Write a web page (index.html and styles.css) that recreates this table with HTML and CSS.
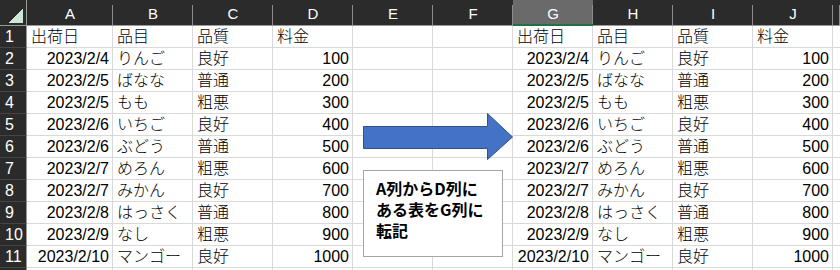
FILE: index.html
```html
<!DOCTYPE html>
<html lang="ja">
<head>
  <meta charset="UTF-8" />
  <title>転記</title>
  <link rel="stylesheet" href="styles.css">
</head>
<body>
  <div class="sheet">
    <div class="grid" id="grid"></div>

    <svg class="arrow" width="151" height="48" viewBox="0 0 151 48">
      <polygon points="0.5,13.5 124.5,13.5 124.5,0.5 149.5,24 124.5,46.5 124.5,35.5 0.5,35.5"
        fill="#4472c4" stroke="#2f528f" stroke-width="1" />
    </svg>

    <div class="memo">
      <div>A列からD列に</div>
      <div>ある表をG列に</div>
      <div>転記</div>
    </div>
  </div>

  <script>
    const cols = ['A', 'B', 'C', 'D', 'E', 'F', 'G', 'H', 'I', 'J', ''];
    const data = [
      ['出荷日', '品目', '品質', '料金'],
      ['2023/2/4', 'りんご', '良好', 100],
      ['2023/2/5', 'ばなな', '普通', 200],
      ['2023/2/5', 'もも', '粗悪', 300],
      ['2023/2/6', 'いちご', '良好', 400],
      ['2023/2/6', 'ぶどう', '普通', 500],
      ['2023/2/7', 'めろん', '粗悪', 600],
      ['2023/2/7', 'みかん', '良好', 700],
      ['2023/2/8', 'はっさく', '普通', 800],
      ['2023/2/9', 'なし', '粗悪', 900],
      ['2023/2/10', 'マンゴー', '良好', 1000]
    ];

    const grid = document.getElementById('grid');

    function cell(cls, text) {
      const div = document.createElement('div');
      div.className = cls;
      div.textContent = text;
      grid.appendChild(div);
    }

    // column letters
    cell('corner', '');
    cols.forEach((c) => cell(c === 'G' ? 'col-head active' : 'col-head', c));

    // A-D and the copy in G-J
    for (let r = 0; r < 12; r++) {
      const row = data[r];
      cell('row-head', row ? r + 1 : '');
      for (let c = 0; c < cols.length; c++) {
        let value = '';
        if (row && c < 4) value = row[c];
        if (row && c >= 6 && c < 10) value = row[c - 6];
        const right = r > 0 && row && (c % 6 === 0 || c % 6 === 3) && c < 10;
        cell(right ? 'cell num' : 'cell', value);
      }
    }
  </script>
</body>
</html>
```

FILE: styles.css
```css
* {
  box-sizing: border-box;
  margin: 0;
  padding: 0;
}
body {
  background: #ffffff;
  font-family: "Liberation Sans", "Noto Sans CJK JP", sans-serif;
  overflow: hidden;
}
.sheet {
  position: relative;
  width: 840px;
  height: 270px;
  overflow: hidden;
}
.grid {
  display: grid;
  grid-template-columns: 27px 86px repeat(9, 80px) 7px;
  grid-template-rows: 26px repeat(12, 22px);
}
.corner {
  background: #2b2b2b;
  border-right: 1px solid #9a9a9a;
  border-bottom: 1px solid #9a9a9a;
  display: flex;
  align-items: flex-end;
  justify-content: flex-end;
  padding: 0 3px 2px 0;
}
.corner::after {
  content: "";
  width: 14px;
  height: 14px;
  background: linear-gradient(to bottom right, transparent 50%, #cde8d9 50%);
}
.col-head {
  background: linear-gradient(#8c8c8c, #8c8c8c) right 5px / 1px 100% no-repeat, #2b2b2b;
  border-bottom: 1px solid #9a9a9a;
  color: #ffffff;
  font-size: 15px;
  display: flex;
  align-items: center;
  justify-content: center;
  padding-top: 2px;
}
.col-head.active {
  background: linear-gradient(#8c8c8c, #8c8c8c) right 5px / 1px 100% no-repeat, #6a6a6a;
  border-bottom: 2px solid #1e7145;
}
.row-head {
  background: #2b2b2b;
  border-right: 1px solid #9a9a9a;
  border-bottom: 1px solid #454545;
  color: #ffffff;
  font-size: 16px;
  line-height: 21px;
  padding-left: 5px;
}
.cell {
  border-right: 1px solid #d9d9d9;
  border-bottom: 1px solid #d9d9d9;
  color: #000000;
  font-size: 16px;
  font-weight: 300;
  line-height: 21px;
  padding: 0 3px 0 4px;
  white-space: nowrap;
  overflow: hidden;
}
.cell.num {
  text-align: right;
  padding: 0 3px 0 0;
}
.arrow {
  position: absolute;
  left: 363px;
  top: 113px;
}
.memo {
  position: absolute;
  left: 363px;
  top: 170px;
  width: 140px;
  height: 87px;
  background: #ffffff;
  border: 1px solid #a6a6a6;
  padding: 9px 0 0 12px;
  font-family: "Noto Sans CJK JP", sans-serif;
  font-weight: bold;
  font-size: 16px;
  color: #000000;
}
.memo div {
  height: 21px;
  line-height: 16px;
}
```
